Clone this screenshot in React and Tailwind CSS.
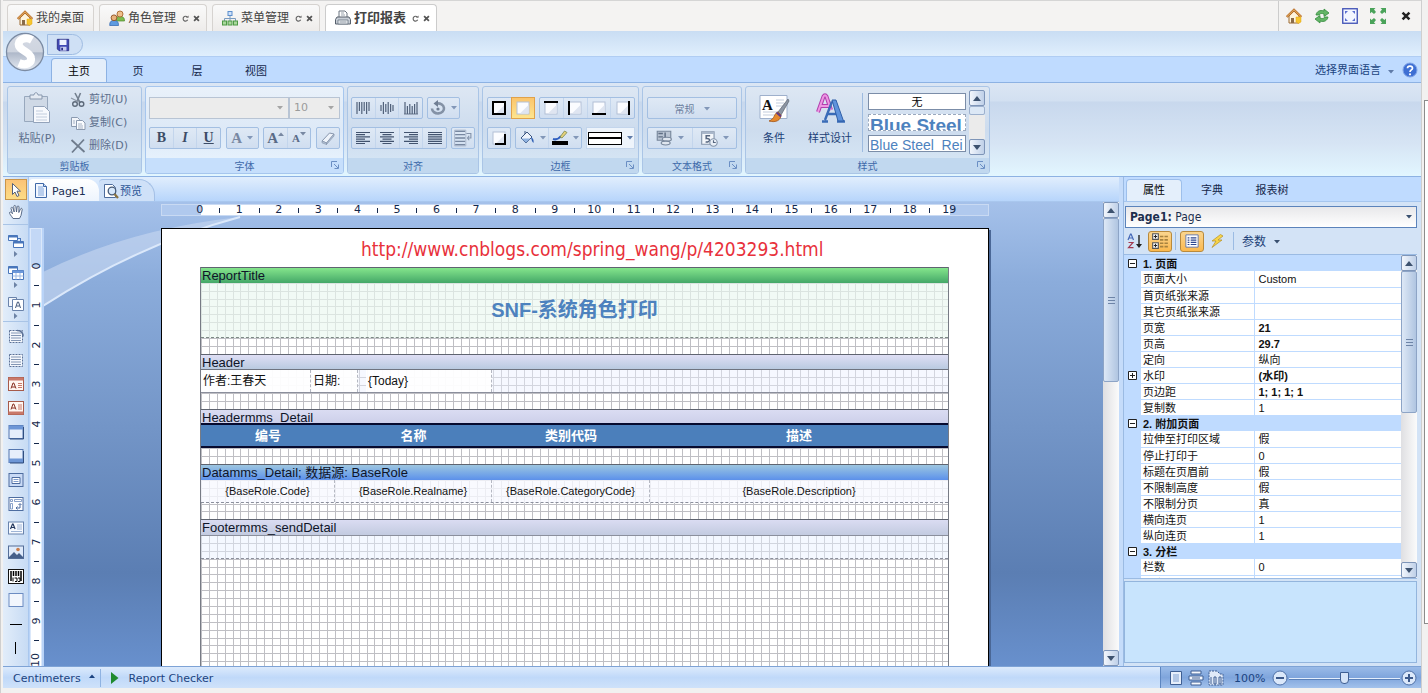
import { useState } from 'react';

/* ---------- shared bits ---------- */

const Svg = ({ size = 16, children, className = '' }) => (
  <svg width={size} height={size} viewBox="0 0 16 16" fill="none" className={`shrink-0 ${className}`} aria-hidden="true">
    {children}
  </svg>
);

const Caret = ({ className = 'text-[#5f7ba8]' }) => (
  <svg width="6" height="4" viewBox="0 0 6 4" className={`shrink-0 ${className}`} aria-hidden="true">
    <path d="M0 0h6L3 3.5z" fill="currentColor" />
  </svg>
);

/* ---------- icons ---------- */

const HomeIcon = () => (
  <Svg>
    <path d="M3 8v7h10V8L8 3z" fill="#fdf3dc" stroke="#9c6a33" />
    <path d="M.8 9 8 2l7.2 7" stroke="#b8702a" strokeWidth="2.4" />
    <path d="M1 8.6 8 1.8l7 6.8" stroke="#e9b268" strokeWidth="1" />
    <path d="M5 10h3v5H5z" fill="#8a6b49" />
    <path d="M10 9h5v5l-2.500 1.500L10 14z" fill="#f7c62f" stroke="#e2a512" strokeWidth=".5" />
  </Svg>
);

const UsersIcon = () => (
  <Svg>
    <path d="M6.500 11c0-4 1.500-4.500 4.500-4.500s4.500 1 4.500 4.500z" fill="#7dbb4f" stroke="#4f8a2b" strokeWidth=".7" />
    <circle cx="11" cy="4" r="3" fill="#eec08c" stroke="#a8662b" strokeWidth=".9" />
    <path d="M.7 15.500c0-4 1.300-5 4.300-5s4.500 1 4.500 5z" fill="#5f9be0" stroke="#2b63b0" strokeWidth=".7" />
    <circle cx="5" cy="7.800" r="2.900" fill="#e8b27c" stroke="#8f4f20" strokeWidth=".9" />
  </Svg>
);

const TreeIcon = () => (
  <Svg>
    <path d="M8 6v3M2.500 11V8.500h11V11M8 8v3" stroke="#7a9cc0" />
    <rect x="6" y="1.500" width="4" height="4" fill="#cfe2fa" stroke="#5c8fce" />
    <rect x=".5" y="11" width="4" height="4" fill="#a9d79c" stroke="#4d9a45" />
    <rect x="6" y="11" width="4" height="4" fill="#a9d79c" stroke="#4d9a45" />
    <rect x="11.500" y="11" width="4" height="4" fill="#a9d79c" stroke="#4d9a45" />
  </Svg>
);

const PrinterIcon = () => (
  <Svg>
    <path d="M4 7V1h6l2 2v4" fill="#fff" stroke="#6b7480" />
    <path d="M6 3h3M6 5h4" stroke="#9aa3ad" />
    <path d="M2 7h12l1.500 2.500V14H.5V9.500z" fill="#c8ced6" stroke="#565f6b" />
    <path d="M3 10h10v4H3z" fill="#f4f6f8" stroke="#7b8591" />
    <path d="M4.500 12h7" stroke="#8a94a0" />
  </Svg>
);

const RefreshIcon = () => (
  <Svg>
    <path d="M2 7c.5-3.500 4-5.500 8-4V1l5 4-5 3.500V6c-2-.8-4-.8-5 1z" fill="#63b567" stroke="#348a3c" strokeWidth=".8" />
    <path d="M14 9c-.5 3.500-4 5.500-8 4v2l-5-4 5-3.500V10c2 .8 4 .8 5-1z" fill="#63b567" stroke="#348a3c" strokeWidth=".8" />
  </Svg>
);

const FullIcon = () => (
  <Svg>
    <rect x=".75" y=".75" width="14.500" height="14.500" fill="#f3f6ff" stroke="#3d4fb5" strokeWidth="1.300" />
    <path d="M3 6V3h3zM10 3h3v3zM13 10v3h-3zM6 13H3v-3z" fill="#5a6fd0" />
  </Svg>
);

const ExpandIcon = () => (
  <Svg>
    <path d="M0 0h5.500L4 1.600 6 4 4 6 1.600 4 0 5.500zM16 0v5.500L14.400 4 12 6l-2-2 2-2.400L10.500 0zM16 16h-5.500l1.500-1.600L10 12l2-2 2.400 2 1.600-1.500zM0 16v-5.500L1.600 12 4 10l2 2-2 2.400L5.500 16z" fill="#4aa35a" />
  </Svg>
);

const CrossIcon = ({ size = 10, className = 'text-[#222]' }) => (
  <Svg size={size} className={className}>
    <path d="M2.500 2.500l11 11M13.500 2.500l-11 11" stroke="currentColor" strokeWidth="4" />
  </Svg>
);

const ReloadIcon = () => (
  <Svg size={7}>
    <path d="M12 4.500A5.500 5.500 0 1 0 13 11" stroke="#666" strokeWidth="2.600" />
    <path d="M9 6.500h6V1z" fill="#666" />
  </Svg>
);

const SaveIcon = () => (
  <Svg size={14}>
    <path d="M1.500 1.500h13v13h-11l-2-2z" fill="#4148b4" stroke="#2b2f86" />
    <path d="M4 2h8v6H4z" fill="#eef1ff" />
    <path d="M5 10h7v4.500H5z" fill="#c8cdf0" />
    <path d="M6 11h2v3H6z" fill="#2b2f86" />
  </Svg>
);

const HelpIcon = () => (
  <Svg>
    <circle cx="8" cy="8" r="7" fill="#3e6fd3" stroke="#7fa3e6" />
    <path d="M5.500 6.200C5.500 3.300 10.500 3.300 10.500 6.200 10.500 8 8 7.900 8 10" stroke="#fff" strokeWidth="1.700" />
    <circle cx="8" cy="12.300" r="1.100" fill="#fff" />
  </Svg>
);

const PasteIcon = () => (
  <svg width="30" height="32" viewBox="0 0 30 32" fill="none" aria-hidden="true">
    <path d="M2.500 4.500h23v25h-23z" fill="#cfd9e6" stroke="#98a8bd" />
    <path d="M8 7V3h4c0-3 4-3 4 0h4v4z" fill="#e4eaf2" stroke="#8797ad" />
    <path d="M11.500 14.500h11l5 5v11h-16z" fill="#f7f9fd" stroke="#93a3ba" />
    <path d="M14 19h7M14 22h11M14 25h11M14 28h11" stroke="#c2cddd" />
  </svg>
);

const CutIcon = () => (
  <Svg>
    <path d="M5 1l5 9.500M10.500 1 7 9.500" stroke="#74808f" strokeWidth="1.600" />
    <circle cx="5" cy="12" r="2.300" stroke="#5e6a7a" strokeWidth="1.400" />
    <circle cx="11.500" cy="12" r="2.300" stroke="#5e6a7a" strokeWidth="1.400" />
    <path d="M1 6l8 4" stroke="#8f9aa8" strokeWidth="1.300" />
  </Svg>
);

const CopyIcon = () => (
  <Svg>
    <path d="M1.500 2.500h6l2 2v7h-8z" fill="#f2f5fa" stroke="#8b9ab0" />
    <path d="M6.500 5.500h6l2.500 2.500v6.500H6.500z" fill="#fafcff" stroke="#8b9ab0" />
    <path d="M8 9h4M8 11h5M8 13h5M3 6h2M3 8h2" stroke="#a5b2c5" />
  </Svg>
);

const DeleteIcon = () => (
  <Svg>
    <path d="M1.500 2l13 12M14 1.500 2 14.500" stroke="#6f7c8d" strokeWidth="1.800" />
  </Svg>
);

const EraserIcon = () => (
  <Svg>
    <path d="M2 11 9.500 3l4.500 1-7.500 9z" fill="#eef3fa" stroke="#8796ad" />
    <path d="M2 11l4.500 2v1.500L2 12.800zM6.500 13 14 4v2l-7.500 8.500z" fill="#b9c6d8" stroke="#8796ad" strokeWidth=".7" />
  </Svg>
);

const VAlign = ({ mode }) => {
  const ends = {
    top: [[2, 14], [2, 11], [2, 14], [2, 11], [2, 14], [2, 11]],
    mid: [[5, 11], [2, 14], [4, 12], [2, 14], [4, 12], [5, 11]],
    bottom: [[2, 14], [6, 14], [4, 14], [6, 14], [4, 14], [2, 14]],
  }[mode];
  return (
    <Svg>
      {ends.map(([a, b], i) => (
        <path key={i} d={`M${2 + i * 2.4} ${a}V${b}`} stroke="#51617a" strokeWidth="1.200" />
      ))}
      {mode === 'bottom' && <path d="M1 14h14" stroke="#51617a" strokeWidth=".8" />}
    </Svg>
  );
};

const HAlign = ({ mode }) => {
  const rows = [14, 9, 14, 9, 14, 9].map((w) => (mode === 'justify' ? 14 : w));
  return (
    <Svg>
      {rows.map((w, i) => {
        const x = mode === 'left' || mode === 'justify' ? 1 : mode === 'right' ? 15 - w : 8 - w / 2;
        return <path key={i} d={`M${x} ${2.5 + i * 2.2}h${w}`} stroke="#42536e" strokeWidth="1.200" />;
      })}
    </Svg>
  );
};

const RotateIcon = () => (
  <Svg>
    <path d="M2 8.500a6 5 0 1 0 5-5" stroke="#8492a6" strokeWidth="2.600" />
    <path d="M8 0v7L3.500 3.500z" fill="#6f7e94" />
    <circle cx="8" cy="9" r="1.600" fill="#6f7e94" />
  </Svg>
);

const WrapIcon = () => (
  <Svg size={18}>
    <path d="M1 2h9M1 5h9M1 8h9M1 11h9M1 14h9" stroke="#7787a0" strokeWidth="1.300" />
    <path d="M.5 1h10v14H.5z" stroke="#a9b6ca" strokeWidth=".8" />
    <path d="M11 4h4v4h-3M13.500 6 12 8l1.500 2" stroke="#8493ab" />
  </Svg>
);

/* square with one or more thick edges */
const EdgeIcon = ({ d }) => (
  <Svg>
    <rect x="2" y="2" width="12" height="12" fill="#fbfcff" stroke="#b3c0d6" />
    <path d="M13.500 5v8.500H5z" fill="#dfe5f1" />
    {d && <path d={d} stroke="#000" strokeWidth="2" />}
  </Svg>
);

const BucketIcon = () => (
  <Svg>
    <path d="M2 8l6-6 5 5-6 6z" fill="#eef3fb" stroke="#3b5580" />
    <path d="M2.500 8.500h9L7 12.800z" fill="#8fb2e0" />
    <path d="M6 4V1" stroke="#3b5580" />
    <path d="M12 7c2 1 3 3 2.500 6C13 12 12.500 10 12 7z" fill="#2f5fb3" />
  </Svg>
);

const PenIcon = () => (
  <Svg>
    <path d="M1 9c3 1 6-.5 8-3" stroke="#2f5fc0" strokeWidth="2" />
    <path d="M8 7l4.500-6L15 2.500 10 8z" fill="#e7d27d" stroke="#6b7b3d" strokeWidth=".7" />
    <path d="M0 11h16v4H0z" fill="#000" />
  </Svg>
);

const MoneyIcon = () => (
  <Svg size={18}>
    <path d="M2 2h12v8H2z" fill="#b9c4d3" stroke="#78879c" />
    <path d="M3 4h4M3 7h4M9 3v6" stroke="#5f6e84" strokeWidth="1.300" />
    <ellipse cx="10.500" cy="9" rx="4" ry="1.700" fill="#dfe6ef" stroke="#78879c" />
    <ellipse cx="9.500" cy="12.500" rx="4" ry="1.700" fill="#dfe6ef" stroke="#78879c" />
  </Svg>
);

const CalendarIcon = () => (
  <Svg size={18}>
    <path d="M1.500 2.500h11v11h-11z" fill="#f4f7fb" stroke="#8494aa" />
    <path d="M1.500 2.500h11v2h-11z" fill="#a9b7ca" />
    <path d="M9 6H5.500v2.500C9.500 8 9.500 12 5 11.500" stroke="#56667f" strokeWidth="1.300" />
    <circle cx="12" cy="12" r="3.300" fill="#e9eff7" stroke="#8494aa" />
    <path d="M12 10v2h2" stroke="#56667f" />
  </Svg>
);

const ConditionIcon = () => (
  <svg width="32" height="32" viewBox="0 0 32 32" fill="none" aria-hidden="true">
    <path d="M2 3.500h27v23H2z" fill="#fff" stroke="#9eb0cc" />
    <path d="M18 8h8M18 11h8M18 14h8M5 20h18M5 23h14" stroke="#c3cddd" />
    <text x="4" y="18" fontSize="15" fontWeight="700" fill="#111" fontFamily="Liberation Serif, serif">A</text>
    <path d="M30 7 20 20l3 3 8-14z" fill="#8c95a3" stroke="#5b6470" strokeWidth=".7" />
    <path d="M20 20c-4 1-3 7-9 9 7 2 12-1 12-6z" fill="#e58a2f" stroke="#a2571b" strokeWidth=".8" />
    <path d="M18.500 20.500l4.500 4" stroke="#5f3b86" strokeWidth="2" />
  </svg>
);

const StyleIcon = () => (
  <svg width="32" height="32" viewBox="0 0 32 32" fill="none" aria-hidden="true">
    <path d="M4 20 9.500 4.500Q11 2 12.500 4.500L17 18M6.500 14h9" stroke="#b23fae" strokeWidth="4" />
    <path d="M4 20 9.500 4.500Q11 2 12.500 4.500L17 18M6.500 14h9" stroke="#ee97e3" strokeWidth="2" />
    <path d="M11 28 18 9.500M13.500 22h12M8 29.500h6M23 29.500h8" stroke="#3a6cb8" strokeWidth="2.400" />
    <path d="M18 8h4l7.500 21h-5.500z" fill="#5f93dc" stroke="#2f5fa8" />
  </svg>
);

const CornerIcon = () => (
  <svg width="8" height="8" viewBox="0 0 8 8" fill="none" aria-hidden="true">
    <path d="M.5 6V.5H6M3 3l4 4M7.500 3.500v4h-4" stroke="#6b8fc4" />
  </svg>
);

const PageIcon = () => (
  <Svg>
    <path d="M2.500 1.500h8l3 3v11h-11z" fill="#f2f7ff" stroke="#3f69a8" />
    <path d="M5 5h5M5 7h6M5 9h6M5 11h6M5 13h6" stroke="#7fa4da" />
    <path d="M10.500 1.500v3h3" fill="#cfe0f7" stroke="#3f69a8" />
  </Svg>
);

const PreviewIcon = () => (
  <Svg>
    <path d="M1.500 1.500h8l3 3v10h-11z" fill="#fff" stroke="#4d6c9c" />
    <circle cx="9" cy="8" r="3.800" fill="#d7e8fb" stroke="#455a78" strokeWidth="1.300" />
    <path d="M11.500 11l3.500 4" stroke="#8a7340" strokeWidth="2.200" />
  </Svg>
);

const Play = () => (
  <svg width="8" height="12" viewBox="0 0 8 12" aria-hidden="true">
    <path d="M0 0l7.500 6L0 12z" fill="#1f8a2f" />
  </svg>
);

/* toolbox */
const ArrowTool = () => (
  <Svg>
    <path d="M4.500 1.500v11l2.500-2.500 2 4.500 2-1-2-4.300h3.500z" fill="#fff" stroke="#55617a" />
  </Svg>
);
const HandTool = () => (
  <Svg>
    <path d="M5 14.500C3.500 12 1 9.500 1.500 8.500s2-.3 3 1.200L3 4.500c-.3-1.300 1.500-1.700 1.900-.4L6.200 8 5.800 2.500c0-1.400 1.800-1.400 2 0L8.500 8l.7-5.200c.2-1.300 1.900-1 1.800.3L10.800 8.500 12.500 5c.6-1.200 2-.6 1.700.6L13 11.500l-1.500 3z" fill="#fff" stroke="#4a5c7c" strokeWidth=".9" />
  </Svg>
);
const BandsTool = () => (
  <Svg>
    <path d="M.5 1.500h9v5h-9z" fill="#fff" stroke="#4976bb" />
    <path d="M.5 1.500h9v2h-9z" fill="#4976bb" />
    <path d="M5.500 7.500h10v6h-10z" fill="#fff" stroke="#4976bb" />
    <path d="M5.500 7.500h10v2h-10z" fill="#4976bb" />
    <path d="M12.500 4v4M10 4.500h3" stroke="#4976bb" />
  </Svg>
);
const CrossBandsTool = () => (
  <Svg>
    <path d="M.5 1.500h9v7h-9z" fill="#fff" stroke="#4976bb" />
    <path d="M.5 1.500h9v2h-9z" fill="#4976bb" />
    <path d="M4.500 5.500h11v9h-11z" fill="#fff" stroke="#4976bb" />
    <path d="M4.500 5.500h11V8h-11z" fill="#6d98da" />
    <path d="M8 8v6.500M12 8v6.500M4.500 11h11" stroke="#9db9e3" />
  </Svg>
);
const ComponentsTool = () => (
  <Svg>
    <path d="M.5 1.500h8v9h-8z" fill="#f2f6fc" stroke="#6a83ab" />
    <path d="M4.500 3.500h11v11h-11z" fill="#fff" stroke="#6a83ab" />
    <path d="M7.500 12l2-6h1l2 6M8.500 10h3" stroke="#44587b" />
  </Svg>
);
const Band = ({ top, bottom }) => (
  <Svg>
    <path d="M1.500 2.500h13v12h-13z" fill="#f4f7fc" stroke="#5b7196" strokeDasharray={top || bottom ? '2 1' : undefined} />
    <path d="M3 5h10M3 7.500h10M3 10h10M3 12.500h10" stroke="#8396b4" />
    {top && <path d="M9 2.500c4 0 6 2 6 6" stroke="#5b7196" strokeWidth="1.500" />}
  </Svg>
);
const RedBand = ({ low }) => (
  <Svg>
    <rect x=".5" y="1.500" width="15" height="13" fill="#fff6f1" stroke="#a65a4a" />
    <path d={low ? 'M.5 11.500h15v3H.5z' : 'M.5 1.500h15v3H.5z'} fill="#c9796a" />
    <path d={low ? 'M3 9.500 5 4h.8L8 9.500M3.800 8H7' : 'M3 12.500 5 7h.8L8 12.500M3.800 11H7'} stroke="#862d1f" />
    <path d={low ? 'M10 5h4M10 7h4M10 9h4' : 'M10 7.500h4M10 9.500h4M10 11.500h4'} stroke="#c9796a" />
  </Svg>
);
const BlueBand = ({ low }) => (
  <Svg>
    <rect x="1" y="1.500" width="14" height="13" fill="#e6eefb" stroke="#5476af" />
    <path d={low ? 'M1 10.500h14v4H1z' : 'M1 1.500h14v4H1z'} fill="#6d96d6" />
    <path d="M15.500 3v12H2" stroke="#314f80" />
  </Svg>
);
const PanelTool = () => (
  <Svg>
    <rect x="1" y="1.500" width="14" height="13" fill="#c9daf5" stroke="#4e6da0" />
    <path d="M4 5.500h8v6H4z" fill="#fff" stroke="#4e6da0" />
    <path d="M5.500 7.500h5M5.500 9.500h5" stroke="#7f9ccc" />
  </Svg>
);
const CrossTabTool = () => (
  <Svg>
    <rect x="1" y="1.500" width="14" height="13" fill="#fff" stroke="#4e6da0" />
    <path d="M2.500 3.500h2v2h-2zM6.500 3.500h7v2h-7zM2.500 7.500h2v5.500h-2z" stroke="#6d8bbd" strokeWidth=".8" />
    <path d="M8 12h4V8M9.500 10.500 8 12l1.500 1.500M10.500 9 12 7.500 13.500 9" stroke="#4e6da0" />
  </Svg>
);
const TextTool = () => (
  <Svg>
    <rect x=".5" y="2" width="15" height="12" fill="#f7faff" stroke="#6983ad" />
    <path d="M2.500 9 4.500 4h.6l2 5M3.300 7.500h3" stroke="#24385e" strokeWidth="1.200" />
    <path d="M9 5h5M9 7h5M9 9h5M3 11.500h11" stroke="#9fb4d6" />
  </Svg>
);
const ImageTool = () => (
  <Svg>
    <rect x=".5" y="2" width="15" height="12.500" fill="#dfeafa" stroke="#536d98" />
    <path d="M1 13l5-5 3 3 2-2 4 4v1H1z" fill="#455f8a" />
    <circle cx="10" cy="5.500" r="1.800" fill="#c97d4d" />
  </Svg>
);
const BarcodeTool = () => (
  <Svg>
    <rect x=".5" y="1.500" width="15" height="14" fill="#fff" stroke="#111" />
    <path d="M3 3v10M5.500 3v5M8 3v5M10.500 3v5M13 3v10" stroke="#000" strokeWidth="1.500" />
    <path d="M5 9.500v4M6.500 10h2.500v3.500H7M10 10h2v3.500h-2" stroke="#000" />
  </Svg>
);
const ShapeTool = () => (
  <Svg>
    <rect x="1" y="1.500" width="14" height="13" fill="#f2f6fd" stroke="#6c8cc2" />
  </Svg>
);
const HLineTool = () => (
  <Svg>
    <path d="M2 8.500h12" stroke="#000" />
  </Svg>
);
const VLineTool = () => (
  <Svg>
    <path d="M7.500 2v12" stroke="#000" />
  </Svg>
);

/* ---------- top tabs ---------- */

const pageTabs = [
  { title: '我的桌面', icon: HomeIcon },
  { title: '角色管理', icon: UsersIcon, closable: true },
  { title: '菜单管理', icon: TreeIcon, closable: true },
  { title: '打印报表', icon: PrinterIcon, closable: true },
];

const TopBar = () => (
  <header className="flex h-[31px] shrink-0 justify-between border-t border-[#d5d5d5] bg-[#f4f3f2]">
    <nav className="flex items-end gap-[5px] pl-1">
      {pageTabs.map(({ title, icon: Icon, closable }) => {
        const active = title === '打印报表';
        return (
          <div
            key={title}
            className={`flex h-[27px] items-center rounded-t border border-b-0 pl-[9px] ${closable ? 'pr-[6px]' : 'pr-[9px]'} ${active ? 'border-[#ccc] bg-white text-[13px] font-bold text-[#444]' : 'border-[#d6d3d0] bg-linear-to-b from-[#fafafa] to-[#eeecea] text-[12px] text-[#444]'}`}
          >
            <button className="flex items-center gap-[3px]">
              <Icon />
              <span>{title}</span>
            </button>
            {closable && (
              <span className="ml-[6px] flex items-center gap-[4px]">
                <button aria-label={`刷新 ${title}`}><ReloadIcon /></button>
                <button aria-label={`关闭 ${title}`}><CrossIcon size={7} className="text-[#555]" /></button>
              </span>
            )}
          </div>
        );
      })}
    </nav>
    <div className="flex items-center gap-3 border-l border-[#ccc] pr-[7px] pl-[7px]">
      <button aria-label="主页"><HomeIcon /></button>
      <button aria-label="刷新"><RefreshIcon /></button>
      <button aria-label="全屏"><FullIcon /></button>
      <button aria-label="展开"><ExpandIcon /></button>
      <button aria-label="关闭" className="flex w-4 justify-center"><CrossIcon size={10} /></button>
    </div>
  </header>
);

/* ---------- ribbon ---------- */

const Logo = () => (
  <svg width="40" height="40" viewBox="0 0 40 40" className="absolute top-[1px] left-[2px]" aria-hidden="true">
    <defs>
      <linearGradient id="orb" x1="0" y1="0" x2="0" y2="1">
        <stop offset="0" stopColor="#d5dae4" />
        <stop offset=".5" stopColor="#ced4df" />
        <stop offset=".52" stopColor="#aeb8c9" />
        <stop offset="1" stopColor="#e6ebf3" />
      </linearGradient>
    </defs>
    <circle cx="20" cy="20" r="18.500" fill="url(#orb)" stroke="#7b8ba3" strokeWidth="1.300" />
    <path d="M27 8C20 4 12 8 14 14c2 5 11 6 12 12 1 5-5 8-12 5" fill="none" stroke="#fff" strokeWidth="8" />
  </svg>
);

const Group = ({ label, corner, active, className = '', children }) => (
  <section
    className={`flex h-[88px] shrink-0 flex-col overflow-hidden rounded-[3px] border ${active ? 'border-[#a6c6ee] bg-linear-to-b from-[#e9f1fa] via-[#dde9f7] to-[#eaf5ff]' : 'border-[#aac5e6] bg-linear-to-b from-[#dde7f3] via-[#cddcee] to-[#d8e8f6]'} ${className}`}
  >
    <div className="flex min-h-0 flex-1">{children}</div>
    <div className={`relative flex h-[15px] items-center justify-center pt-[2px] text-[10px] leading-[13px] text-[#3e6aaa] ${active ? 'bg-[#c6dffc]' : 'bg-[#c1d8ef]'}`}>
      {label}
      {corner && (
        <button aria-label={`${label}选项`} className="absolute right-[4px] bottom-[4px]"><CornerIcon /></button>
      )}
    </div>
  </section>
);

const ButtonSet = ({ children, className = '' }) => (
  <div className={`flex h-[22px] items-center divide-x divide-[#c3d5ec] rounded-[2px] border border-[#a3bfe2] bg-linear-to-b from-[#dfe9f5] to-[#d0def0] ${className}`}>
    {children}
  </div>
);

const ToolButton = ({ label, wide, on, children }) => (
  <button
    aria-label={label}
    className={`flex h-full flex-1 items-center justify-center ${wide ? 'gap-[5px]' : ''} ${on ? 'bg-linear-to-b from-[#fbc56c] to-[#fde58f] outline outline-[#e0a24a]' : ''}`}
  >
    {children}
    {wide && <Caret className="text-[#8297b8]" />}
  </button>
);

const clipboardItems = [
  { label: '剪切(U)', icon: CutIcon },
  { label: '复制(C)', icon: CopyIcon },
  { label: '删除(D)', icon: DeleteIcon },
];

const Glyph = ({ className = '', children }) => (
  <span className={`font-['Liberation_Serif',serif] leading-[16px] font-bold ${className}`}>{children}</span>
);

const ScrollButton = ({ up, className = 'h-[16px]' }) => (
  <button
    aria-label={up ? '向上滚动' : '向下滚动'}
    className={`flex w-4 shrink-0 items-center justify-center rounded-[2px] border border-[#7e95b8] bg-linear-to-r from-[#f2f6fc] to-[#bfd0e8] text-[#3d526f] ${className}`}
  >
    <svg width="8" height="5" viewBox="0 0 8 5" aria-hidden="true">
      <path d={up ? 'M0 5h8L4 0z' : 'M0 0h8L4 5z'} fill="currentColor" />
    </svg>
  </button>
);

const Ribbon = () => (
  <div className="relative shrink-0">
    <div className="flex h-[25px] items-start bg-linear-to-b from-[#c9ddf3] to-[#e0effd] pl-[44px]">
      <div className="mt-[3px] flex h-[21px] w-[36px] items-center justify-center rounded-r-full border border-[#9fbce2] bg-[#cfe0f5] pr-1">
        <button aria-label="保存"><SaveIcon /></button>
      </div>
    </div>
    <div className="flex h-[26px] items-end justify-between border-t border-[#b0cdf3] bg-[#bfdbff]">
      <div className="flex items-end pl-[48px] text-[11px] text-[#15284b]">
        <button className="h-[24px] w-[56px] rounded-t border border-b-0 border-[#8db2e3] bg-[#e4eefa] pt-1 text-black">主页</button>
        <button className="h-[24px] w-[62px] pt-1">页</button>
        <button className="h-[24px] w-[56px] pt-1">层</button>
        <button className="h-[24px] w-[62px] pt-1">视图</button>
      </div>
      <div className="flex h-full items-center gap-[8px] pr-[3px] text-[11px] text-[#1b4481]">
        <button className="flex items-center gap-[7px] pt-1">选择界面语言 <Caret /></button>
        <button aria-label="帮助"><HelpIcon /></button>
      </div>
    </div>
    <Logo />

    <div className="flex h-[95px] gap-[3px] border-t border-b border-[#8db2e3] bg-[linear-gradient(#dbe6f4,#d2e0f1_18px,#c8d8ed_19px,#d6e4f4_60px,#e2f6ff)] pt-[3px] pl-1">
      <Group label="剪贴板" className="w-[135px]">
        <button className="flex w-[58px] flex-col items-center gap-[7px] pt-[5px] text-[11px] leading-[16px] text-[#5d6f8c]">
          <PasteIcon />
          粘贴(P)
        </button>
        <div className="flex flex-col gap-[7px] pt-[5px] pl-1 text-[11px] leading-[16px] text-[#5d6f8c]">
          {clipboardItems.map(({ label, icon: Icon }) => (
            <button key={label} className="flex items-center gap-[3px]"><Icon />{label}</button>
          ))}
        </div>
      </Group>

      <Group label="字体" corner active className="w-[199px]">
        <div className="flex flex-1 flex-col gap-2 px-[3px] pt-[10px]">
          <div className="flex">
            {[['字体名称', '', 'flex-1'], ['字号', '10', 'w-[51px]']].map(([name, value, width]) => (
              <div key={name} className={`relative flex items-center ${width}`}>
                <select aria-label={name} disabled className="h-[22px] w-full appearance-none border border-[#b8c4d4] bg-[#ececec] pl-1 text-[11px] text-[#9b9b9b] opacity-100">
                  <option>{value}</option>
                </select>
                <Caret className="absolute right-[6px] text-[#a5a5a5]" />
              </div>
            ))}
          </div>
          <div className="flex justify-between">
            <ButtonSet className="w-[72px]">
              <ToolButton label="加粗"><Glyph className="text-[14px] text-[#3c4c66]">B</Glyph></ToolButton>
              <ToolButton label="斜体"><Glyph className="text-[14px] text-[#3c4c66] italic">I</Glyph></ToolButton>
              <ToolButton label="下划线"><Glyph className="text-[14px] text-[#3c4c66] underline">U</Glyph></ToolButton>
            </ButtonSet>
            <ButtonSet className="w-[33px]">
              <ToolButton label="字体颜色" wide><Glyph className="text-[15px] text-[#7888a2]">A</Glyph></ToolButton>
            </ButtonSet>
            <ButtonSet className="w-[48px]">
              <ToolButton label="增大字号"><Glyph className="text-[15px] text-[#5a6b87]">A</Glyph><span className="mb-[9px]"><Caret className="rotate-180 text-[#7888a2]" /></span></ToolButton>
              <ToolButton label="减小字号"><Glyph className="text-[11px] text-[#5a6b87]">A</Glyph><span className="mb-[9px]"><Caret className="text-[#7888a2]" /></span></ToolButton>
            </ButtonSet>
            <ButtonSet className="w-[24px]">
              <ToolButton label="清除"><EraserIcon /></ToolButton>
            </ButtonSet>
          </div>
        </div>
      </Group>

      <Group label="对齐" className="w-[132px]">
        <div className="flex flex-1 flex-col gap-2 px-[3px] pt-[10px]">
          <div className="flex gap-1">
            <ButtonSet className="w-[72px]">
              <ToolButton label="顶端对齐"><VAlign mode="top" /></ToolButton>
              <ToolButton label="垂直居中"><VAlign mode="mid" /></ToolButton>
              <ToolButton label="底端对齐"><VAlign mode="bottom" /></ToolButton>
            </ButtonSet>
            <ButtonSet className="w-[33px]">
              <ToolButton label="旋转" wide><RotateIcon /></ToolButton>
            </ButtonSet>
          </div>
          <div className="flex gap-1">
            <ButtonSet className="w-[96px]">
              <ToolButton label="左对齐"><HAlign mode="left" /></ToolButton>
              <ToolButton label="居中"><HAlign mode="center" /></ToolButton>
              <ToolButton label="右对齐"><HAlign mode="right" /></ToolButton>
              <ToolButton label="两端对齐"><HAlign mode="justify" /></ToolButton>
            </ButtonSet>
            <ButtonSet className="w-[24px]">
              <ToolButton label="自动换行"><WrapIcon /></ToolButton>
            </ButtonSet>
          </div>
        </div>
      </Group>

      <Group label="边框" corner className="w-[157px]">
        <div className="flex flex-1 flex-col gap-2 px-1 pt-[10px]">
          <div className="flex gap-1">
            <ButtonSet className="w-[48px]">
              <ToolButton label="全部边框"><EdgeIcon d="M2 2h12v12H2z" /></ToolButton>
              <ToolButton label="无边框" on><EdgeIcon /></ToolButton>
            </ButtonSet>
            <ButtonSet className="w-[96px]">
              <ToolButton label="上边框"><EdgeIcon d="M1 2h14" /></ToolButton>
              <ToolButton label="左边框"><EdgeIcon d="M2 1v14" /></ToolButton>
              <ToolButton label="下边框"><EdgeIcon d="M1 14h14" /></ToolButton>
              <ToolButton label="右边框"><EdgeIcon d="M14 1v14" /></ToolButton>
            </ButtonSet>
          </div>
          <div className="flex gap-1">
            <ButtonSet className="w-[24px]">
              <ToolButton label="阴影"><EdgeIcon d="M4 14h10V4" /></ToolButton>
            </ButtonSet>
            <ButtonSet className="w-[67px]">
              <ToolButton label="填充颜色" wide><BucketIcon /></ToolButton>
              <ToolButton label="边框颜色" wide><PenIcon /></ToolButton>
            </ButtonSet>
            <button aria-label="边框样式" className="flex h-[22px] w-[49px] items-center justify-center gap-[5px] border border-[#c3d5ec] bg-[#eef4fb]">
              <span className="flex h-[13px] w-[34px] items-center border border-black bg-white">
                <span className="h-[2px] w-full bg-black" />
              </span>
              <Caret />
            </button>
          </div>
        </div>
      </Group>

      <Group label="文本格式" corner className="w-[100px]">
        <div className="flex flex-1 flex-col gap-2 px-1 pt-[10px]">
          <ButtonSet>
            <button className="flex flex-1 items-center justify-center gap-[9px] pt-[2px] text-[10px] text-[#6c7f9e]">常规 <Caret className="text-[#8297b8]" /></button>
          </ButtonSet>
          <ButtonSet>
            <ToolButton label="货币" wide><MoneyIcon /></ToolButton>
            <ToolButton label="日期" wide><CalendarIcon /></ToolButton>
          </ButtonSet>
        </div>
      </Group>

      <Group label="样式" corner className="w-[245px]">
        <button className="flex w-[56px] flex-col items-center gap-[7px] pt-[5px] text-[11px] leading-[16px] text-[#1b3f77]">
          <ConditionIcon />
          条件
        </button>
        <button className="flex w-[56px] flex-col items-center gap-[7px] pt-[5px] text-[11px] leading-[16px] text-[#1b3f77]">
          <StyleIcon />
          样式设计
        </button>
        <div className="my-[6px] ml-[4px] w-[6px] border-l border-[#9dbbe0]" />
        <div className="flex min-w-0 flex-1 flex-col justify-between py-[6px] font-['Liberation_Sans','Noto_Sans_CJK_SC',sans-serif] text-[#4d82be]">
          <button className="h-[17px] border border-[#7b8da8] bg-white text-[11px] leading-[17px] text-black">无</button>
          <button className="h-[17px] overflow-hidden border border-dashed border-[#9aa9be] bg-white px-px text-left text-[19px] leading-[22px] font-bold whitespace-nowrap">Blue Steel</button>
          <button className="h-[17px] overflow-hidden border border-[#7b8da8] bg-white px-px text-left text-[14px] leading-[18px] whitespace-nowrap">Blue Steel_Rei</button>
        </div>
        <div className="mr-[4px] ml-[3px] flex flex-col py-[3px]">
          <ScrollButton up />
          <div className="h-[9px] rounded-[2px] border border-[#9db1ce] bg-[#dce8f6]" />
          <div className="flex-1 bg-[#ebebeb]" />
          <ScrollButton />
        </div>
      </Group>
    </div>
  </div>
);

/* ---------- toolbox ---------- */

const dropTools = [
  { label: '带区', icon: BandsTool },
  { label: '交叉带区', icon: CrossBandsTool },
  { label: '组件', icon: ComponentsTool },
];

const tools = [
  ['报表标题', <Band top />],
  ['报表汇总', <Band bottom />],
  ['页眉', <RedBand />],
  ['页脚', <RedBand low />],
  ['标题', <BlueBand />],
  ['数据', <BlueBand low />],
  ['面板', <PanelTool />],
  ['交叉表', <CrossTabTool />],
  ['文本', <TextTool />],
  ['图像', <ImageTool />],
  ['条形码', <BarcodeTool />],
  ['形状', <ShapeTool />],
  ['水平线', <HLineTool />],
  ['垂直线', <VLineTool />],
];

const Toolbox = () => (
  <aside className="flex w-[26px] shrink-0 flex-col items-center overflow-hidden border-r border-[#a9c7ee] bg-linear-to-r from-[#e2edfa] to-[#c7dbf4]">
    <button aria-label="选择" className="mt-[2px] flex h-[21px] w-[22px] shrink-0 items-center justify-center border border-[#c9954a] bg-linear-to-b from-[#fbc377] to-[#fddc85]"><ArrowTool /></button>
    <button aria-label="移动" className="flex h-[24px] shrink-0 items-center"><HandTool /></button>
    <div className="w-full shrink-0 border-t border-[#a9c4e6]" />
    {dropTools.map(({ label, icon: Icon }) => (
      <button key={label} aria-label={label} className="flex h-[31px] shrink-0 flex-col items-center justify-end gap-[2px]">
        <Icon />
        <Caret className="-rotate-90 text-[#6d83a6]" />
      </button>
    ))}
    <div className="mt-[3px] w-full shrink-0 border-t border-[#a9c4e6]" />
    {tools.map(([label, icon]) => (
      <button key={label} aria-label={label} className="flex h-[24px] shrink-0 items-center pt-1">{icon}</button>
    ))}
  </aside>
);

/* ---------- design surface ---------- */

const Ruler = ({ count, vertical }) => (
  <>
    {Array.from({ length: count * 2 + 1 }, (_, i) => (
      <span key={i} className={`flex flex-1 items-center justify-center overflow-visible ${vertical ? 'min-h-0' : 'min-w-0'}`}>
        {i % 2 === 0 ? (
          <span className={vertical ? '-rotate-90' : ''}>{i / 2}</span>
        ) : (
          <span className={vertical ? 'h-px w-[5px] bg-[#15284b]' : 'h-[5px] w-px bg-[#15284b]'} />
        )}
      </span>
    ))}
  </>
);

/* 2 mm design grid, 95 columns over the 19 cm printable width */
const GridLines = () => {
  const step = 749 / 95;
  let d = '';
  for (let i = 0; i < 95; i++) d += `M${Math.round(i * step) + 0.5} 0V1100`;
  for (let i = 0; i < 140; i++) d += `M0 ${Math.round(i * step) + 0.5}H749`;
  return (
    <svg width="100%" height="1100" className="absolute top-0 left-0" aria-hidden="true">
      <path d={d} stroke="#bfbfc4" strokeWidth="1" />
    </svg>
  );
};

const BandHead = ({ children, className }) => (
  <div className={`border-t border-[#5f6470] pl-[1px] text-[13px] leading-[15px] text-[#0e1428] ${className}`}>{children}</div>
);

const columns = 'grid grid-cols-[134px_157px_158px_1fr]';

const ReportPage = () => (
  <div className="h-[1171px] w-[828px] border border-black bg-white pr-[39px] pl-[38px] font-['Liberation_Sans','Noto_Sans_CJK_SC',sans-serif] shadow-[2px_2px_0_#4a6796]">
    <div className="h-[38px] pl-[161px] font-['DejaVu_Sans_Condensed','DejaVu_Sans',sans-serif] text-[19px] leading-[40px] whitespace-nowrap text-[#e8313b]">
      http://www.cnblogs.com/spring_wang/p/4203293.html
    </div>
    <div className="relative h-[1092px] border-r border-l border-[#777b85]">
      <GridLines />
      <div className="relative flex flex-col gap-4">
        <section>
          <BandHead className="h-[16px] bg-linear-to-b from-[#84e58c] to-[#43a868]">ReportTitle</BandHead>
          <div className="flex h-[55px] items-center justify-center border-b border-dashed border-[#7d8a85] bg-[#eaf7f0]/65 text-[20px] font-bold text-[#4d82be]">
            SNF-系统角色打印
          </div>
        </section>
        <section>
          <BandHead className="h-[15px] bg-linear-to-b from-[#dfdff5] to-[#b9cae0]">Header</BandHead>
          <div className="flex h-[24px] items-center border-t border-b border-t-[#6f7480] border-b-[#8b8f9c] bg-[#eaf0ff]/45 text-[12px] text-[#111]">
            <div className="flex h-full w-[110px] items-center border-r border-dashed border-[#b5b8c2] bg-white/90 pl-[2px]">作者:王春天</div>
            <div className="mr-[8px] flex h-full w-[47px] items-center border-r border-dashed border-[#b5b8c2] bg-white/90 pl-[2px]">日期:</div>
            <div className="flex h-full w-[126px] items-center border-r border-dashed border-[#b5b8c2] bg-white/90 pl-[2px]">{'{Today}'}</div>
          </div>
        </section>
        <section>
          <BandHead className="h-[14px] bg-linear-to-b from-[#dadcf2] to-[#cdd0ea]">Headermms_Detail</BandHead>
          <div className={`${columns} h-[25px] items-center border-t-2 border-b-2 border-[#060a2e] bg-[#4b7fbb] text-center text-[13px] font-bold text-white`}>
            <span>编号</span>
            <span>名称</span>
            <span>类别代码</span>
            <span>描述</span>
          </div>
        </section>
        <section>
          <BandHead className="h-[16px] bg-linear-to-b from-[#9dc6e0] to-[#5c90ea]">Datamms_Detail; 数据源: BaseRole</BandHead>
          <div className={`${columns} h-[23px] items-center divide-x divide-dashed divide-[#b5b8c2] border-b border-dashed border-[#8b8f9c] bg-[#f8f9ff]/80 text-center text-[11px] leading-[22px] text-[#111]`}>
            <span>{'{BaseRole.Code}'}</span>
            <span>{'{BaseRole.Realname}'}</span>
            <span>{'{BaseRole.CategoryCode}'}</span>
            <span>{'{BaseRole.Description}'}</span>
          </div>
        </section>
        <section>
          <BandHead className="h-[17px] border-b border-b-[#8b8f9c] bg-linear-to-b from-[#dadcf2] to-[#c3cbe0]">Footermms_sendDetail</BandHead>
          <div className="h-[23px] border-b border-dashed border-[#8b8f9c] bg-[#e6efff]/45" />
        </section>
      </div>
    </div>
  </div>
);

const Designer = () => (
  <div className="flex min-w-0 flex-1 flex-col">
    <div className="flex h-[25px] shrink-0 items-end border-b border-[#a9c7ee] bg-linear-to-b from-[#e1eefd] to-[#b7d5fb] text-[11px]">
      <button className="flex h-[22px] w-[70px] items-center gap-[3px] rounded-tl-[4px] rounded-tr-[12px] bg-linear-to-b from-white to-[#edf4fd] pl-1 text-[#1b2f55]"><PageIcon /><span className="pt-1">Page1</span></button>
      <button className="flex h-[22px] w-[56px] items-center gap-[1px] rounded-tl-[4px] rounded-tr-[16px] border-t border-r border-[#a4c0e6] bg-[#cfe1f8] pl-[4px] text-[#2c5596]"><PreviewIcon /><span className="pt-1">预览</span></button>
    </div>
    <div className="flex min-h-0 flex-1">
      <div className="relative flex min-w-0 flex-1 flex-col overflow-hidden bg-[linear-gradient(#a5c1ea,#8bacdb_80px,#5b7eb3_80%,#6890cd)]">
        <svg width="240" height="120" className="absolute top-0 left-[14px]" aria-hidden="true">
          <path d="M0 70Q86 27 197 15Q96 42 0 104z" fill="#c4d5f0" fillOpacity=".65" />
          <path d="M0 104Q96 42 197 15" stroke="#dbe8fa" strokeWidth="2" fill="none" />
        </svg>
        <div className="relative flex h-[26px] shrink-0 justify-center pt-[2px] pl-[18px]">
          <div className="flex h-[12px] w-[828px] shrink-0 border border-[#c9daf3] bg-[linear-gradient(to_right,#b0c9ee_39px,white_39px,white_788px,#b0c9ee_788px)] pr-[29px] pl-[28px] text-[11px] leading-[10px] text-[#15284b]">
            <Ruler count={19} />
          </div>
        </div>
        <div className="relative flex min-h-0 flex-1">
          <div className="flex w-[15px] shrink-0 justify-center overflow-hidden bg-[#b9d3f7] pr-px">
            <div className="flex h-[1171px] w-[12px] flex-col border border-[#dbe8fa] bg-[linear-gradient(#c3d8f6_38px,white_38px)] pt-[27px] text-[11px] leading-[10px] text-[#15284b]">
              <div className="flex h-[414px] shrink-0 flex-col">
                <Ruler count={10} vertical />
              </div>
            </div>
          </div>
          <div className="flex min-w-0 flex-1 justify-center overflow-hidden pl-[3px]">
            <div className="shrink-0"><ReportPage /></div>
          </div>
        </div>
      </div>
      <ScrollTrack thumb="h-[164px]" />
    </div>
  </div>
);

const ScrollTrack = ({ thumb }) => (
  <div className="flex w-4 shrink-0 flex-col bg-linear-to-r from-[#dfdfe2] to-[#fbfbfb]">
    <ScrollButton up />
    <div className={`flex flex-col items-center justify-center gap-[2px] rounded-[2px] border border-[#8da4c6] bg-linear-to-r from-[#dde8f6] to-[#b0c5e1] ${thumb}`}>
      {[0, 1, 2].map((i) => <span key={i} className="h-px w-[7px] bg-[#6d84a7]" />)}
    </div>
    <div className="flex-1" />
    <ScrollButton />
  </div>
);

/* ---------- property panel ---------- */

const properties = [
  { section: '1. 页面' },
  { name: '页面大小', value: 'Custom' },
  { name: '首页纸张来源', value: '' },
  { name: '其它页纸张来源', value: '' },
  { name: '页宽', value: '21', bold: true },
  { name: '页高', value: '29.7', bold: true },
  { name: '定向', value: '纵向' },
  { name: '水印', value: '(水印)', bold: true, expandable: true },
  { name: '页边距', value: '1; 1; 1; 1', bold: true },
  { name: '复制数', value: '1' },
  { section: '2. 附加页面' },
  { name: '拉伸至打印区域', value: '假' },
  { name: '停止打印于', value: '0' },
  { name: '标题在页眉前', value: '假' },
  { name: '不限制高度', value: '假' },
  { name: '不限制分页', value: '真' },
  { name: '横向连页', value: '1' },
  { name: '纵向连页', value: '1' },
  { section: '3. 分栏' },
  { name: '栏数', value: '0' },
  { name: '列宽', value: '' },
];

const Toggle = ({ open, label }) => (
  <button aria-label={label} className="mx-auto block">
    <svg width="9" height="9" viewBox="0 0 9 9" fill="none" className="block" aria-hidden="true">
      <path d="M.5.5h8v8h-8z" fill="#fff" stroke="#222" />
      <path d={open ? 'M2 4.500h5' : 'M2 4.500h5M4.500 2v5'} stroke="#222" />
    </svg>
  </button>
);

const PropertyGrid = () => (
  <div className="flex h-[325px] shrink-0 border-t border-b border-[#9bbbe3]">
    <div className="min-w-0 flex-1 overflow-hidden">
      <table className="w-full table-fixed border-collapse font-['Liberation_Sans','Noto_Sans_CJK_SC',sans-serif] text-[11px] leading-[13px] text-[#111]">
        <colgroup>
          <col className="w-[17px]" />
          <col className="w-[113px]" />
          <col />
        </colgroup>
        <tbody>
          {properties.map((p) =>
            p.section ? (
              <tr key={p.section} className="h-4 bg-[#bfdbff]">
                <td className="p-0"><Toggle open label={p.section} /></td>
                <th colSpan={2} scope="rowgroup" className="p-0 pt-[2px] pl-[2px] text-left font-bold">{p.section}</th>
              </tr>
            ) : (
              <tr key={p.name} className="h-4">
                <td className="bg-[#bfdbff] p-0">{p.expandable && <Toggle label={p.name} />}</td>
                <th scope="row" className="border-r border-b border-[#bfdbff] bg-white p-0 pt-[2px] pl-[2px] text-left font-normal">{p.name}</th>
                <td className={`border-b border-[#bfdbff] bg-white p-0 pt-[2px] pl-1 ${p.bold ? 'font-bold' : ''}`}>{p.value}</td>
              </tr>
            )
          )}
        </tbody>
      </table>
    </div>
    <ScrollTrack thumb="h-[142px]" />
  </div>
);

const panelTabs = [['属性', 'w-[56px]'], ['字典', 'w-[60px]'], ['报表树', 'w-[60px]']];

const PropertyPanel = () => {
  const [tab, setTab] = useState('属性');
  return (
    <aside className="ml-[4px] flex w-[298px] shrink-0 flex-col border-l border-[#9bbbe3] bg-[#d3e3f6] pr-[4px]">
      <div className="-mr-[4px] flex h-[25px] shrink-0 items-end border-b border-[#a6c6ee] bg-[#bfdbff] pl-[2px] text-[11px] text-[#15284b]">
        {panelTabs.map(([name, width]) => (
          <button
            key={name}
            onClick={() => setTab(name)}
            className={`h-[22px] pt-[2px] ${width} ${tab === name ? 'rounded-t border border-b-0 border-[#9dbfeb] bg-[#e4effb] text-black' : ''}`}
          >
            {name}
          </button>
        ))}
      </div>
      <button aria-haspopup="listbox" className="mt-[4px] ml-px flex h-[22px] shrink-0 items-center justify-between border border-[#5b83bb] bg-linear-to-b from-[#e8e8ea] to-white px-[4px] font-['DejaVu_Sans_Condensed','DejaVu_Sans',sans-serif] text-[12px] text-[#1d2f4e]">
        <span><b>Page1:</b> Page</span>
        <Caret className="text-[#39506f]" />
      </button>
      <div className="flex h-[26px] shrink-0 items-center pl-[2px]">
        <button aria-label="按字母排序" className="flex w-[18px] items-center justify-center">
          <Svg>
            <path d="M1 7 3.500 1h.6L6.500 7M2 5h3.500" stroke="#4468b8" strokeWidth="1.200" />
            <path d="M1.500 9.500H6l-4.500 5.200h5" stroke="#a23a50" strokeWidth="1.200" />
            <path d="M12 2v11" stroke="#222" strokeWidth="1.400" />
            <path d="M9 11h6l-3 4z" fill="#222" />
          </Svg>
        </button>
        <button aria-label="分类" className="ml-1 flex h-[21px] w-6 items-center justify-center rounded-[3px] border border-[#b98a3c] bg-linear-to-b from-[#fad58e] to-[#fbb94d]">
          <Svg size={18}>
            <path d="M1.500 1.500h5v5h-5zM1.500 9.500h5v5h-5z" fill="#fff" stroke="#555" />
            <path d="M2.500 4h3M4 2.500v3M2.500 12h3M4 10.500v3" stroke="#222" />
            <path d="M8 4h3M12 4h3M8 7h3M12 7h3M8 10h3M12 10h3M8 13h3M12 13h3" stroke="#a7823f" strokeWidth="1.400" />
          </Svg>
        </button>
        <div className="mx-[3px] h-[18px] w-px bg-[#9bbbe3]" />
        <button aria-label="属性列表" className="ml-px flex h-[21px] w-6 items-center justify-center rounded-[3px] border border-[#b98a3c] bg-linear-to-b from-[#fad58e] to-[#fbb94d]">
          <Svg size={14}>
            <path d="M1 1h14v14H1z" fill="#fff" stroke="#5a70a8" />
            <path d="M3 4.500h2M3 7h2M3 9.500h2M3 12h2M6.500 4.500H13M6.500 7H13M6.500 9.500H13M6.500 12H13" stroke="#2c478f" strokeWidth="1.300" />
          </Svg>
        </button>
        <button aria-label="事件" className="ml-[5px]">
          <Svg>
            <path d="M11.500 1.500 3 8h4l-4 6.500L13 7H9l5-4z" fill="#f8d548" stroke="#b58f25" strokeWidth=".7" />
          </Svg>
        </button>
        <div className="mx-2 h-[18px] w-px bg-[#9bbbe3]" />
        <button className="flex items-center gap-2 pt-[2px] text-[12px] text-[#1b3f77]">参数 <Caret className="text-[#39506f]" /></button>
      </div>
      <PropertyGrid />
      <div className="mt-[2px] mb-[3px] flex-1 border border-[#93b5dd] bg-[#c8e4fd]" />
    </aside>
  );
};

/* ---------- status bar ---------- */

const StatusBar = () => {
  const [zoom, setZoom] = useState(100);
  return (
    <footer className="flex h-[22px] shrink-0 border-t border-[#7ea3d6] bg-linear-to-b from-[#dceafc] via-[#c0d9f9] to-[#cfe2fa] text-[11px] text-[#1b4481]">
      <div className="flex flex-1 items-center pl-[10px]">
        <button className="flex items-center gap-2"><span className="pt-[3px]">Centimeters</span> <Caret className="mb-1 rotate-180 text-[#1b4481]" /></button>
        <div className="mr-[10px] ml-[5px] h-[18px] w-px bg-[#8fb3e2]" />
        <button className="flex items-center gap-[10px]"><Play /><span className="pt-[3px]">Report Checker</span></button>
      </div>
      <div className="flex w-[261px] items-center border-l border-[#5d86c0] bg-linear-to-b from-[#9abbe8] via-[#7fa5dc] to-[#a3c2ec] pr-[4px] pl-[5px]">
        <button aria-label="单页" className="flex h-[18px] w-[20px] items-center justify-center">
          <Svg>
            <path d="M2.500 1.500h11v13h-11z" fill="#e6eefb" stroke="#3f5f93" />
            <path d="M5 5h6M5 7h6M5 9h6M5 11h6" stroke="#7f9fd0" />
          </Svg>
        </button>
        <button aria-label="连续页" className="flex w-[20px] justify-center">
          <Svg>
            <path d="M3 1h10v3H3zM1 6h14v4H1zM3 12h10v3H3z" fill="#f4f8fe" stroke="#3f5f93" />
            <path d="M4 8h8" stroke="#3f5f93" />
          </Svg>
        </button>
        <button aria-label="多页" className="flex w-[20px] justify-center">
          <Svg>
            <path d="M1 1h8l3 3h3v11H1z" fill="#dfe9f8" stroke="#3f5f93" strokeDasharray="2 1" />
            <path d="M3 7v7M6 7h2v7H6zM11 7h2v7h-2z" stroke="#3f5f93" />
          </Svg>
        </button>
        <span className="ml-[8px] w-[38px] pt-[3px]">{zoom}%</span>
        <button aria-label="缩小" onClick={() => setZoom(Math.max(10, zoom - 10))}><ZoomIcon /></button>
        <input
          type="range"
          aria-label="缩放"
          min="10"
          max="190"
          value={zoom}
          onChange={(e) => setZoom(Number(e.target.value))}
          className="mx-px h-4 min-w-0 flex-1 appearance-none bg-[linear-gradient(transparent_8px,#e3eefc_8px,#e3eefc_9px,#5a80b8_9px,#5a80b8_10px,transparent_10px)] [&::-webkit-slider-thumb]:h-[12px] [&::-webkit-slider-thumb]:w-[9px] [&::-webkit-slider-thumb]:appearance-none [&::-webkit-slider-thumb]:rounded-b-[4px] [&::-webkit-slider-thumb]:border [&::-webkit-slider-thumb]:border-[#3f5f93] [&::-webkit-slider-thumb]:bg-[#d5e4f8]"
        />
        <button aria-label="放大" onClick={() => setZoom(Math.min(190, zoom + 10))}><ZoomIcon plus /></button>
      </div>
    </footer>
  );
};

const ZoomIcon = ({ plus }) => (
  <Svg>
    <circle cx="8" cy="8" r="7" fill="#dbe8fa" stroke="#4f71a8" />
    <path d={plus ? 'M4 8h8M8 4v8' : 'M4 8h8'} stroke="#3d5a8c" strokeWidth="2" />
  </Svg>
);

const App = () => (
  <div className="flex h-screen overflow-hidden bg-[#f2f1f0] font-['DejaVu_Sans','Noto_Sans_CJK_SC',sans-serif]">
    <div className="flex min-w-0 flex-1 flex-col border-x border-[#cfcfcf] pb-[5px] pl-[2px]">
      <TopBar />
      <Ribbon />
      <main className="flex min-h-0 flex-1 bg-[#c5dcfa]">
        <Toolbox />
        <Designer />
        <PropertyPanel />
      </main>
      <StatusBar />
    </div>
    <div className="w-[6px] shrink-0 pt-[100px] pl-[2px]">
      <div className="h-[524px] border-y border-l border-[#8c8c8c] bg-white" />
    </div>
  </div>
);

export default App;
